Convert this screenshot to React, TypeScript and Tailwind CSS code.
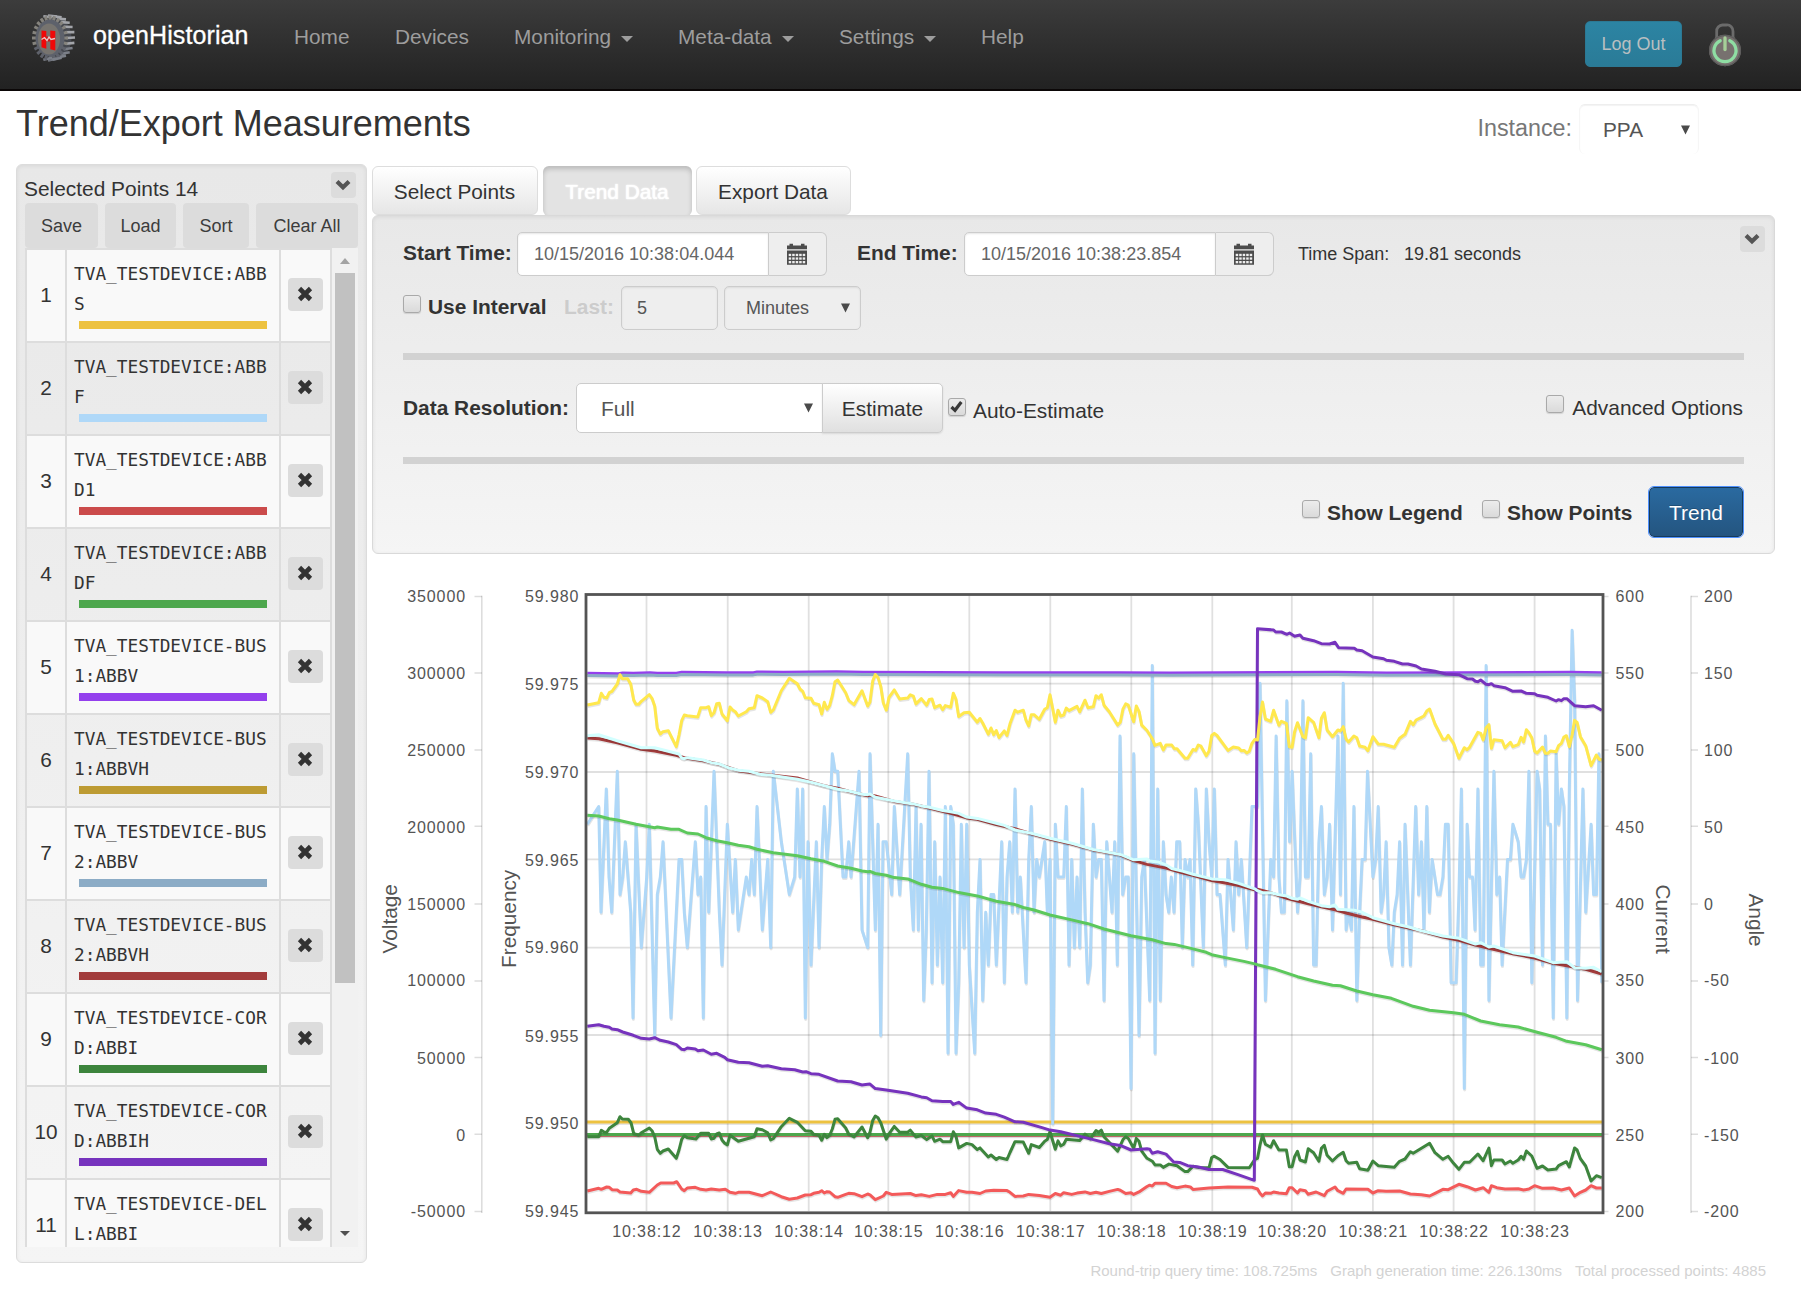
import React from "react";

type Pt = [number, number];

/* ---------- chart data ---------- */

/** Parses "x,y x,y ..." samples and maps them to chart pixels. */
const section = (src: string, ox: number, oy: number, sx: number, sy: number): Pt[] =>
  src
    .trim()
    .split(/\s+/)
    .map((p) => {
      const [x, y] = p.split(",").map(Number);
      return [ox + x / sx, oy + y / sy] as Pt;
    });

const upA = (s: string) => section(s, 370, 570, 3, 3);
const loA = (s: string) => section(s, 370, 900, 3, 3);
const mid = (s: string) => section(s, 850, 580, 3, 2.4123);
const upC = (s: string) => section(s, 1240, 580, 2.8, 3);
const loC = (s: string) => section(s, 1240, 900, 2.8, 3);

/** Frequency samples hold the level in mHz above 59.945 Hz. */
const freq = (s: string, ox: number, sx: number): Pt[] =>
  section(s, ox, 0, sx, 1).map(([x, v]) => [x, 771.3 + (25 - v) * 17.62] as Pt);

const toPath = (pts: Pt[]) => "M" + pts.map(([x, y]) => `${x.toFixed(1)} ${y.toFixed(1)}`).join("L");

const frequency: Pt[] = [
  ...freq(
    "652,22 686,23 693,17 709,24 717,19 725,17 742,25 750,18 758,19 766,21 782,17 789,11 798,22 814,15 830,19 838,22 854,10 862,18 871,19 879,21 903,11 927,20 935,20 943,17 952,15 976,21 984,18 992,19 1000,11 1008,23 1016,17 1032,25 1048,17 1056,14 1072,22 1088,17 1096,20 1105,16 1129,19 1137,18 1145,20 1153,18 1161,23 1177,16 1193,20 1202,15 1210,25 1234,21 1258,18 1274,19 1282,24 1290,19 1298,24 1306,11 1314,21 1323,14 1339,21 1347,15 1355,20 1363,23 1371,20 1379,22 1387,26 1395,25 1403,25 1419,19 1427,19 1436,21 1443,19 1467,25",
    370,
    3
  ),
  ...freq(
    "36,16 53,15 60,26 76,16 84,22 92,10 99,21 109,21 125,18 133,23 149,18 173,26 181,19 190,16 198,23 205,16 213,22 221,12 229,16 237,25 246,13 254,21 262,14 270,19 278,13 286,23 294,9 302,23 310,22 318,9 326,13 334,22 342,15 350,22 358,14 374,9 382,17 390,20 398,12 407,17 415,14 423,18 431,18 439,14 455,21 463,13 471,19 479,21 487,17 495,24 503,17 511,19 528,13 536,20 544,23 552,17 560,20 568,19 584,21 592,17 600,20 608,5 616,22 624,19 641,19 649,23 657,14 665,20 673,15 681,19 689,15 697,24 705,17 713,13 721,14 730,22 738,19 746,20 754,20 762,12 770,21 786,17 794,21 802,14 810,27 818,18 827,19 835,19 843,7 851,26 867,10 875,19 883,20 899,12 907,31 915,9 923,24 931,12 940,21 948,18 956,17 964,19 972,17 980,21 989,21 997,15 1005,20 1013,19 1020,20 1028,14 1037,24 1045,22 1060,15 1069,24 1077,21 1085,19 1093,24 1101,18 1110,18 1126,14 1134,20 1150,16 1158,21 1166,18 1174,20 1190,15 1206,23",
    850,
    3
  ),
  ...freq(
    "49,23 56,30 71,12 86,20 94,19 101,27 109,19 116,17 124,17 131,29 139,21 146,25 161,17 168,19 176,29 183,19 191,19 198,26 206,14 213,14 221,21 228,23 236,18 244,19 251,22 259,16 274,27 281,18 289,30 297,16 304,17 312,16 319,23 327,12 335,17 342,20 350,20 357,25 372,19 380,20 387,23 395,17 402,18 409,21 417,15 425,14 432,17 440,18 447,21 455,14 462,22 477,14 492,23 500,18 508,21 515,16 523,23 530,17 538,20 553,18 560,18 568,19 575,22 583,22 591,13 605,13 613,18 620,24 628,7 636,22 643,19 651,19 658,16 666,24 674,14 681,14 689,31 697,12 711,25 719,18 727,19 734,14 749,20 757,20 764,22 779,21 787,19 794,19 802,20 809,25 817,13 832,25 839,24 847,14 855,27 862,22 869,22 877,11 885,26 892,22 900,24 907,23 915,11 922,24 930,33 937,29 945,12 960,24 968,17 983,22 990,18 998,18 1005,26 1013,13",
    1240,
    2.8
  ),
];

const yellow: Pt[] = [
  ...upA(
    "652,405 686,398 694,370 702,382 710,384 718,368 726,364 742,342 750,314 757,326 773,326 782,342 791,390 798,403 806,403 814,394 838,374 846,385 854,408 862,475 871,492 879,485 895,482 919,530 927,495 935,452 943,435 952,437 983,441 992,413 1008,413 1016,410 1024,437 1032,428 1040,401 1048,400 1056,432 1072,452 1080,411 1088,420 1096,425 1105,438 1129,425 1137,416 1153,413 1161,377 1177,384 1193,395 1202,427 1210,420 1234,362 1258,325 1282,341 1290,357 1298,364 1306,383 1323,385 1331,400 1347,404 1355,432 1363,397 1371,418 1379,406 1387,377 1395,335 1403,330 1427,368 1436,391 1452,404 1476,362 1493,408"
  ),
  ...mid(
    "60,294 68,244 76,228 84,235 92,256 100,296 109,314 117,283 133,265 149,287 173,285 181,277 190,280 198,299 214,286 230,302 238,288 246,287 254,308 270,302 278,313 286,303 302,307 310,273 318,288 326,329 342,320 358,319 382,343 390,334 398,345 415,372 423,357 431,373 439,363 447,380 463,364 471,375 480,347 495,314 503,319 520,314 528,338 536,352 544,325 552,325 568,336 584,312 592,308 600,277 616,343 624,314 632,328 641,326 649,309 657,315 681,305 689,318 705,290 714,308 730,306 738,279 746,285 754,277 762,302 778,318 803,350 811,343 819,311 827,299 835,302 851,342 859,304 867,317 875,350 891,363 907,383 915,399 931,394 940,410 948,398 965,398 973,407 981,407 1005,430 1013,430 1029,409 1037,411 1045,398 1053,401 1069,424 1077,413 1085,375 1093,370 1101,375 1134,411 1150,403 1166,405 1174,412 1182,411 1190,417 1198,413 1206,394 1214,385"
  ),
  ...upC(
    "49,480 56,410 63,366 71,417 86,424 94,391 109,436 116,424 130,430 138,500 146,502 153,455 161,428 176,470 183,474 191,413 206,427 221,473 228,415 236,398 244,450 259,470 274,450 281,453 289,440 297,477 304,486 319,468 327,473 335,498 350,502 358,512 372,470 387,492 402,493 432,502 447,475 462,463 477,424 485,434 493,420 508,412 515,408 523,393 531,387 546,432 568,478 576,478 583,466 598,490 613,535 628,503 636,509 643,502 666,457 674,460 681,480 689,443 697,434 704,505 711,479 734,482 742,503 757,487 764,500 779,494 787,472 794,486 802,449 809,458 817,473 825,513 832,519 847,501 855,520 862,520 869,513 885,515 892,497 900,490 907,471 914,467 922,500 930,465 937,421 944,427 953,470 968,497 983,557 998,525 1006,538 1013,540"
  ),
];

const darkGreen: Pt[] = [
  ...loA(
    "652,710 686,710 694,691 702,696 710,697 718,685 742,668 750,650 757,657 775,658 783,668 791,700 806,706 814,698 838,684 846,692 854,710 862,748 871,760 879,753 895,747 919,775 927,750 935,718 943,707 952,713 978,717 992,700 1016,700 1024,717 1032,715 1040,702 1048,699 1056,720 1064,730 1072,735 1080,706 1105,724 1153,710 1161,686 1177,689 1193,698 1202,720 1210,716 1234,680 1258,655 1282,667 1306,692 1323,694 1331,703 1347,706 1355,721 1363,703 1371,713 1379,706 1387,687 1395,658 1403,656 1427,684 1436,702 1452,711 1476,681 1493,713"
  ),
  ...mid(
    "60,1332 68,1304 76,1293 84,1297 92,1309 109,1349 117,1336 133,1318 149,1332 173,1332 181,1327 198,1344 214,1340 230,1350 246,1341 254,1354 270,1349 278,1355 302,1355 310,1331 318,1342 326,1370 350,1359 366,1362 382,1374 390,1370 415,1392 423,1387 439,1398 447,1393 471,1398 480,1381 495,1355 520,1356 536,1383 544,1362 568,1369 584,1354 592,1350 600,1331 616,1373 624,1353 632,1365 641,1361 649,1349 689,1352 705,1337 721,1348 738,1328 746,1332 754,1327 762,1343 803,1378 819,1350 827,1343 835,1347 851,1371 859,1347 867,1354 875,1378 891,1395 907,1402 915,1411 931,1411 940,1417 957,1409 981,1413 1005,1427 1013,1427 1029,1414 1045,1417 1077,1418 1085,1393 1093,1390 1110,1398 1134,1417 1198,1418 1214,1398"
  ),
  ...loC(
    "49,775 56,735 63,705 71,733 86,742 94,722 109,750 130,750 138,800 146,800 153,770 161,754 168,780 183,786 191,746 206,758 221,784 228,745 236,736 244,766 259,783 274,767 289,757 297,782 304,790 327,787 335,806 358,811 372,783 387,797 432,802 447,784 462,777 477,755 485,760 531,730 546,758 568,778 583,769 598,790 613,808 628,787 643,787 666,762 681,782 697,744 704,797 711,780 734,780 742,792 757,783 764,790 779,780 787,769 794,778 802,753 817,768 832,805 847,798 862,810 885,807 892,797 914,785 922,801 937,744 944,750 953,776 968,798 983,843 998,827 1013,833"
  ),
];

const red: Pt[] = [
  ...loA(
    "652,873 686,865 694,868 710,861 718,862 726,869 742,870 750,876 782,879 790,870 800,868 814,874 838,877 862,855 872,849 911,849 920,845 935,867 943,872 952,864 976,862 992,868 1008,870 1024,867 1048,870 1066,868 1080,877 1096,880 1105,877 1137,877 1177,887 1202,876 1234,890 1258,898 1282,894 1306,885 1323,884 1331,880 1347,877 1355,872 1363,879 1371,875 1379,876 1395,890 1403,892 1427,883 1436,880 1452,881 1476,890 1493,882"
  ),
  ...mid(
    "60,1483 76,1495 100,1486 109,1477 125,1482 181,1480 198,1485 214,1483 238,1487 262,1482 286,1482 302,1478 310,1487 326,1473 350,1477 366,1477 390,1480 407,1474 431,1472 471,1473 480,1477 495,1487 520,1486 536,1482 568,1485 600,1489 616,1480 632,1484 641,1478 665,1482 681,1479 705,1476 721,1480 738,1477 754,1480 778,1475 803,1470 811,1472 827,1480 843,1478 851,1482 867,1476 891,1463 899,1460 907,1462 915,1455 948,1455 965,1463 981,1466 1005,1462 1021,1464 1029,1470 1077,1467 1134,1464 1206,1465"
  ),
  ...loC(
    "49,867 56,880 63,888 71,879 86,880 94,876 109,879 130,881 138,863 146,863 161,879 168,869 183,872 191,883 213,876 236,887 244,874 266,861 274,872 289,880 297,867 358,868 372,879 387,872 409,874 447,873 477,882 508,884 531,888 546,880 568,868 583,869 613,853 636,860 659,870 681,863 697,877 704,857 719,863 742,867 779,866 794,870 809,867 825,857 847,865 877,864 900,870 922,864 937,888 953,877 968,870 983,857 998,864 1013,864"
  ),
];

const purple: Pt[] = [
  ...loA(
    "652,379 686,374 702,379 718,382 726,387 742,389 758,396 790,406 814,415 838,417 854,413 871,421 895,426 919,434 935,448 943,449 952,444 976,447 984,452 1000,450 1024,463 1040,460 1064,472 1072,479 1105,487 1137,488 1177,499 1193,497 1234,506 1274,509 1298,516 1308,515 1323,521 1347,523 1403,543 1443,545 1476,555 1493,553"
  ),
  ...mid(
    "60,1216 76,1227 109,1230 173,1238 214,1247 230,1249 246,1256 278,1258 302,1258 310,1265 326,1260 350,1274 382,1278 407,1286 439,1289 463,1296 495,1307 520,1308 576,1321 600,1327 632,1331 730,1350 778,1360 811,1364 843,1375 891,1372 899,1373 907,1383 923,1379 948,1385 971,1404 989,1405 1013,1413 1045,1416 1077,1422 1118,1422 1166,1435 1213,1448"
  ),
  ...upC(
    "49,146 94,150 100,156 116,156 131,163 139,159 153,169 168,165 176,175 206,182 228,191 251,192 266,187 276,203 320,205 327,210 342,212 372,231 402,236 410,241 432,244 455,252 470,252 493,258 508,267 546,274 576,282 613,284 636,296 651,297 659,304 666,305 674,300 689,313 697,314 704,311 711,317 742,323 764,334 787,333 802,340 825,341 832,346 862,352 885,363 892,359 900,362 907,356 915,356 937,377 968,380 990,377 1013,391"
  ),
];

const cyan: Pt[] = [
  ...upA(
    "652,497 686,494 742,512 814,533 854,533 927,552 935,564 943,566 952,563 1000,570 1024,578 1048,582 1080,595 1105,601 1137,604 1169,613 1202,616 1282,628 1323,637 1363,647 1403,658 1436,663 1476,673 1493,674"
  ),
  ...mid(
    "60,516 76,524 133,533 190,540 214,545 238,548 278,556 302,559 326,563 350,572 382,575 439,587 463,592 495,603 544,611 600,623 665,635 730,650 811,662 851,675 891,673 899,678 923,680 948,687 965,696 1000,703 1029,710 1085,721 1126,723 1166,732 1214,745"
  ),
  ...upC(
    "49,932 63,938 86,938 109,944 131,948 146,955 161,958 168,954 191,964 228,977 251,980 266,975 274,988 320,991 342,997 372,1013 402,1022 432,1031 470,1040 508,1052"
  ),
  ...loC("531,98 568,108 613,115 659,132 674,128 697,141 711,138 764,158 825,168 877,188 915,185 937,203 968,205 990,202 1013,215"),
];

const maroon: Pt[] = [
  ...upA(
    "652,504 686,506 742,518 814,538 854,543 919,556 943,563 1000,572 1048,583 1105,602 1169,611 1202,615 1282,624 1323,636 1363,647 1403,655 1436,664 1493,677"
  ),
  ...mid(
    "60,519 76,521 133,534 190,541 238,550 302,563 326,568 350,574 382,577 439,590 495,600 544,612 600,625 665,637 730,651 811,663 851,677 891,686 948,695 1000,707 1029,712 1085,725 1126,731 1166,737 1214,747"
  ),
  ...upC("49,928 86,938 131,955 161,963 191,971 228,980 266,989 300,1000 342,1011 372,1018 432,1034 508,1052"),
  ...loC("531,100 568,111 613,121 659,135 697,145 764,161 825,174 877,190 915,197 968,208 1013,222"),
];

const lightGreen: Pt[] = [
  ...upA(
    "652,736 686,738 718,746 742,750 798,763 854,773 862,771 903,778 927,778 952,789 984,792 1008,803 1040,812 1072,818 1105,826 1137,830 1161,838 1210,848 1282,857 1323,866 1363,874 1403,888 1443,895 1476,903 1493,905"
  ),
  ...mid(
    "60,703 76,708 109,712 133,718 173,721 214,734 246,741 278,744 326,754 382,762 439,775 495,783 520,790 552,796 600,808 665,820 714,829 762,842 843,858 907,868 948,877 973,879 1029,890 1069,898 1085,904 1126,911 1182,920 1214,926"
  ),
  ...loC(
    "49,194 100,208 161,230 206,243 259,256 281,257 327,273 372,284 424,295 485,319 531,331 598,338 628,343 674,363 727,374 779,381 832,397 885,412 915,424 968,434 1013,449"
  ),
];

const violet: Pt[] = upA(
  "652,310 745,311 758,309 790,310 840,308 862,310 919,310 935,307 1070,308 1150,308 1161,306 1240,307 1400,305 1480,307 1900,308 2250,308 2400,309 2900,307 3050,309 3600,307 3695,308"
);
const steel: Pt[] = violet.map(([x, y]) => [x, y + 2.2]);

const series: { color: string; pts: Pt[] }[] = [
  { color: "#edc240", pts: [[587, 1122], [1602, 1122]] },
  { color: "#afd8f8", pts: frequency },
  { color: "#cb4b4b", pts: [[587, 1135.3], [1602, 1135.3]] },
  { color: "#4da74d", pts: [[587, 1134.6], [1602, 1134.6]] },
  { color: "#9440ed", pts: violet },
  { color: "#8cacc6", pts: steel },
  { color: "#a23c3c", pts: maroon },
  { color: "#3d853d", pts: darkGreen },
  { color: "#7633bd", pts: purple },
  { color: "#ffe84d", pts: yellow },
  { color: "#d2ffff", pts: cyan },
  { color: "#f35a5a", pts: red },
  { color: "#5cc85c", pts: lightGreen },
];

const axisY = [596.5, 673, 750, 826.3, 904, 981, 1057.5, 1134.3, 1211.5];
const voltage = ["350000", "300000", "250000", "200000", "150000", "100000", "50000", "0", "-50000"];
const current = ["600", "550", "500", "450", "400", "350", "300", "250", "200"];
const angle = ["200", "150", "100", "50", "0", "-50", "-100", "-150", "-200"];
const labelY = [601.7, 678.5, 756, 832.5, 910, 986.3, 1063.7, 1141, 1217];
const hertz = ["59.980", "59.975", "59.970", "59.965", "59.960", "59.955", "59.950", "59.945"];
const hertzY = [601.5, 690, 777.5, 865.5, 953, 1042, 1129.3, 1217];
const gridY = [683.7, 772, 859.3, 947.7, 1035];
const gridX = [646.5, 727.7, 808.7, 888.3, 969.3, 1050.3, 1131.3, 1212.3, 1291.8, 1372.9, 1453.6, 1534.6];

function Chart() {
  return (
    <svg
      className="block h-[690px] w-[1403px] shrink-0"
      viewBox="372 565 1403 690"
      fontFamily="'Liberation Sans', Arial, sans-serif"
      fill="none"
    >
      <rect x="586" y="594.5" width="1017" height="618.3" fill="#fff" />
      <g stroke="#545454" strokeOpacity="0.18" strokeWidth="1.8">
        {gridY.map((y) => (
          <path key={y} d={`M587 ${y}H1602`} />
        ))}
        {gridX.map((x) => (
          <path key={x} d={`M${x} 596V1211`} />
        ))}
      </g>
      <g stroke="#545454" strokeOpacity="0.2" strokeWidth="1.6">
        <path d="M481.8 595.7V1213M1691 595.7V1213" />
        {axisY.map((y) => (
          <path key={y} d={`M474.5 ${y}H482M1604 ${y}H1608.5M1691 ${y}H1698`} />
        ))}
      </g>
      <g strokeLinejoin="round" strokeWidth="3">
        {series.map((s) => (
          <g key={s.color}>
            <path d={toPath(s.pts.map(([x, y]) => [x + 0.4, y + 1.5] as Pt))} stroke="#000" strokeOpacity="0.1" />
            <path d={toPath(s.pts)} stroke={s.color} />
          </g>
        ))}
      </g>
      <rect x="586" y="594.5" width="1017" height="618.3" stroke="#545454" strokeWidth="2.8" />
      <g fill="#545454" fontSize="16" letterSpacing="0.9">
        {voltage.map((t, i) => (
          <text key={t} x="466" y={labelY[i]} textAnchor="end">
            {t}
          </text>
        ))}
        {hertz.map((t, i) => (
          <text key={t} x="579.3" y={hertzY[i]} textAnchor="end">
            {t}
          </text>
        ))}
        {current.map((t, i) => (
          <text key={t} x="1615.5" y={labelY[i]}>
            {t}
          </text>
        ))}
        {angle.map((t, i) => (
          <text key={t} x="1704" y={labelY[i]}>
            {t}
          </text>
        ))}
        {gridX.map((x, i) => (
          <text key={x} x={x + 0.4} y="1236.8" textAnchor="middle">
            {`10:38:${12 + i}`}
          </text>
        ))}
      </g>
      <g fill="#545454" fontSize="20.8">
        <text transform="translate(397 953.5) rotate(-90)">Voltage</text>
        <text transform="translate(515.5 968) rotate(-90)">Frequency</text>
        <text transform="translate(1655.5 884.5) rotate(90)">Current</text>
        <text transform="translate(1749 893.5) rotate(90)">Angle</text>
      </g>
    </svg>
  );
}

/* ---------- icons ---------- */

function GearLogo() {
  const teeth = Array.from({ length: 24 }, (_, i) => {
    const a = (i / 24) * Math.PI * 2;
    const c = Math.cos(a);
    const s = Math.sin(a);
    return { x1: 19 + 13 * c, y1: 24 + 18 * s, x2: 19 + 18 * c, y2: 24 + 22.5 * s, right: c > -0.3, light: s < 0.3 };
  });
  return (
    <svg className="h-[48px] w-[46px]" viewBox="0 0 46 48">
      <ellipse cx="25.5" cy="24" rx="15" ry="20.5" fill="#45484f" />
      {teeth.map((t, i) => (
        <g key={i}>
          {t.right && (
            <path
              d={`M${t.x2 - 2} ${t.y2}L${t.x2 + 7} ${24 + (t.y2 - 24) * 0.93 - 0.5}`}
              stroke={t.light ? "#a3a5aa" : "#7b7f88"}
              strokeWidth="2.6"
            />
          )}
          <path d={`M${t.x1} ${t.y1}L${t.x2} ${t.y2}`} stroke={t.light ? "#85837d" : "#5f626b"} strokeWidth="3" />
        </g>
      ))}
      <ellipse cx="19" cy="24" rx="14.5" ry="18.5" fill="#5d616b" />
      <ellipse cx="18" cy="25" rx="11" ry="15.5" fill="#77746f" />
      <path d="M10.500 16.500l4.800.6v17.600l-4.800-1.400zM19.300 16.500l5 .4v19.500l-5-1.200z" fill="#f00808" />
      <path d="M15 22.500h4.500v5H15z" fill="#c81a1a" />
      <path d="M10.500 25.500l3-2 2.500 3 2-3.500 2 2.500 4-1" stroke="#e9c8c8" strokeWidth="1.3" fill="none" />
    </svg>
  );
}

function LockPower() {
  return (
    <svg className="h-[44px] w-[34px]" viewBox="0 0 34 44" fill="none">
      <path d="M8.700 15V8.500A6 6 0 0 1 14.500 2h4A6 6 0 0 1 25 8.500V15" stroke="#6b6b6b" strokeWidth="2.8" />
      <ellipse cx="17" cy="27.500" rx="16" ry="15.700" fill="#77716f" />
      <ellipse cx="17" cy="27.500" rx="15.300" ry="15" stroke="#5c5c5c" strokeWidth="1.300" />
      <path d="M12.200 17.700A11 11 0 1 0 21.800 17.700" stroke="#8fdda3" strokeWidth="3.300" strokeLinecap="round" />
      <path d="M17 15v11.500" stroke="#a5cf98" strokeWidth="3.300" strokeLinecap="round" />
    </svg>
  );
}

const ChevronBox = ({ className }: { className: string }) => (
  <div className={`flex h-[26px] w-[25px] items-center justify-center rounded-[4px] bg-[#dcdcdc] pr-px ${className}`}>
    <svg className="h-[12px] w-[16px]" viewBox="0 0 16 12">
      <path d="M2 2.500L8 8.300L14 2.500" fill="none" stroke="#555" strokeWidth="4.200" />
    </svg>
  </div>
);

const RemoveIcon = () => (
  <svg className="h-[16px] w-[16px]" viewBox="0 0 16 16">
    <path d="M2.500 2.500L13.500 13.500M13.500 2.500L2.500 13.500" stroke="#333" strokeWidth="4.600" />
  </svg>
);

const CalendarIcon = () => (
  <svg className="h-[22px] w-[20px]" viewBox="0 0 20 22">
    <path d="M0 2.500h2.500V0.700h3.500v1.800h8V0.700h3.500v1.800H20V6.300H0zM0 7.500h20v14.200H0z" fill="#4c4c4c" />
    {[10.8, 14.4, 18].map((y) =>
      [1.5, 5, 8.5, 12, 15.5].map((x) => <rect key={`${x}-${y}`} x={x + 0.2} y={y} width="2.500" height="2.300" fill="#eee" />)
    )}
  </svg>
);

const DownTriangle = () => (
  <svg className="h-[10px] w-[9px] shrink-0" viewBox="0 0 9 10">
    <path d="M0 0.500H9L4.500 9.500z" fill="#4a4a4a" />
  </svg>
);

const Check = ({ on, className = "" }: { on?: boolean; className?: string }) => (
  <div
    className={`h-[18px] w-[18px] shrink-0 rounded-[3px] border-[1.5px] border-[#a9a9a9] bg-linear-to-b from-[#ececec] to-[#dadada] shadow-[0_1px_1px_rgba(0,0,0,0.12)] ${className}`}
  >
    {on && (
      <svg className="block h-[15px] w-[15px]" viewBox="0 0 15 15">
        <path d="M2.500 8L6 11.300L12.300 3" fill="none" stroke="#383838" strokeWidth="3.200" />
      </svg>
    )}
  </div>
);

/* ---------- page pieces ---------- */

const nav = [
  { label: "Home", w: "w-[101px]" },
  { label: "Devices", w: "w-[119px]" },
  { label: "Monitoring", w: "w-[164px]", menu: true },
  { label: "Meta-data", w: "w-[161px]", menu: true },
  { label: "Settings", w: "w-[142px]", menu: true },
  { label: "Help", w: "w-[60px]" },
];

function Navbar() {
  return (
    <header className="flex h-[91px] shrink-0 items-start border-b-2 border-[#0b0707] bg-linear-to-b from-[#3c3c3c] to-[#222]">
      <div className="ml-[31px] mt-[14px]">
        <GearLogo />
      </div>
      <div className="ml-[16px] mt-[20px] w-[201px] text-[25px] leading-[31px] tracking-[0.1px] text-white [-webkit-text-stroke:0.3px_#fff]">
        openHistorian
      </div>
      <nav className="mt-[22px] flex text-[20.8px] leading-[30px] text-[#9d9d9d]">
        {nav.map((n) => (
          <div key={n.label} className={`flex items-center whitespace-nowrap ${n.w}`}>
            {n.label}
            {n.menu && (
              <span className="ml-[10px] mt-[3px] border-x-[6px] border-t-[6px] border-x-transparent border-t-[#9d9d9d]" />
            )}
          </div>
        ))}
      </nav>
      <button className="ml-auto mt-[21px] flex h-[46px] w-[97px] items-center justify-center rounded-[5px] border border-[#2c7994] bg-linear-to-b from-[#2c84a3] to-[#2a7b97] text-[18px] text-[#b9bfc1]">
        Log Out
      </button>
      <div className="ml-[26px] mr-[59px] mt-[23px]">
        <LockPower />
      </div>
    </header>
  );
}

const points = [
  ["TVA_TESTDEVICE:ABB", "S", "bg-[#edc240]"],
  ["TVA_TESTDEVICE:ABB", "F", "bg-[#afd8f8]"],
  ["TVA_TESTDEVICE:ABB", "D1", "bg-[#cb4b4b]"],
  ["TVA_TESTDEVICE:ABB", "DF", "bg-[#4da74d]"],
  ["TVA_TESTDEVICE-BUS", "1:ABBV", "bg-[#9440ed]"],
  ["TVA_TESTDEVICE-BUS", "1:ABBVH", "bg-[#bd9b33]"],
  ["TVA_TESTDEVICE-BUS", "2:ABBV", "bg-[#8cacc6]"],
  ["TVA_TESTDEVICE-BUS", "2:ABBVH", "bg-[#a23c3c]"],
  ["TVA_TESTDEVICE-COR", "D:ABBI", "bg-[#3d853d]"],
  ["TVA_TESTDEVICE-COR", "D:ABBIH", "bg-[#7633bd]"],
  ["TVA_TESTDEVICE-DEL", "L:ABBI", "bg-[#ffe84d]"],
];

function SelectedPoints() {
  return (
    <aside className="ml-[16px] mt-[-1px] flex h-[1099px] w-[351px] shrink-0 flex-col rounded-[6px] border border-[#dcdcdc] bg-linear-to-b from-[#e8e8e8] to-[#f5f5f5] pl-[8px] shadow-[inset_0_1px_4px_rgba(0,0,0,0.07)]">
      <div className="flex h-[38px] justify-between">
        <div className="ml-[-1px] mt-[8px] text-[20.9px] leading-[31px] text-[#333]">Selected Points 14</div>
        <ChevronBox className="mr-[10px] mt-[7px]" />
      </div>
      <div className="flex text-[18px] text-[#3c3c3c]">
        <button className="h-[45px] w-[73px] rounded-[4px] bg-[#dcdcdc] pt-px">Save</button>
        <button className="ml-[7px] h-[45px] w-[71px] rounded-[4px] bg-[#dcdcdc] pt-px">Load</button>
        <button className="ml-[7px] h-[45px] w-[66px] rounded-[4px] bg-[#dcdcdc] pt-px">Sort</button>
        <button className="ml-[7px] h-[45px] w-[102px] rounded-[4px] bg-[#dcdcdc] pt-px">Clear All</button>
      </div>
      <div className="flex h-[999px]">
        <div className="w-[307px] overflow-hidden border-l-2 border-[#ddd]">
          {points.map(([a, b, color], i) => (
            <div key={i} className={`flex h-[93px] border-t-2 border-[#ddd] ${i % 2 === 0 ? "bg-[#f9f9f9]" : ""}`}>
              <div className="flex w-[38px] items-center justify-center pb-[1px] text-[20.8px] text-[#333]">{i + 1}</div>
              <div className="w-[214px] border-l-2 border-[#ddd] pl-[7px] pt-[9px]">
                <div className="font-['DejaVu_Sans_Mono','Liberation_Mono',monospace] text-[17.8px] leading-[30px] text-[#333]">
                  <div className="whitespace-nowrap">{a}</div>
                  <div>{b}</div>
                </div>
                <div className={`ml-[5px] mt-[2px] h-[8px] w-[188px] ${color}`} />
              </div>
              <div className="w-[53px] border-x-2 border-[#ddd] pl-[7px] pt-[28px]">
                <div className="flex h-[33px] w-[35px] items-center justify-center rounded-[4px] bg-[#dcdcdc] pb-px pr-[2px]">
                  <RemoveIcon />
                </div>
              </div>
            </div>
          ))}
        </div>
        <div className="flex w-[26px] flex-col items-center bg-[#f1f1f1]">
          <div className="mt-[10px] border-x-[5.5px] border-b-[6px] border-x-transparent border-b-[#a3a3a3]" />
          <div className="mt-[9px] h-[710px] w-[20px] bg-[#c1c1c1]" />
          <div className="mt-[248px] border-x-[5px] border-t-[5.5px] border-x-transparent border-t-[#505050]" />
        </div>
      </div>
    </aside>
  );
}

const TimeInput = ({ value }: { value: string }) => (
  <div className="flex h-[44px]">
    <div className="flex w-[252px] items-center rounded-l-[5px] border-[1.5px] border-[#ccc] bg-white pl-[16px] pt-px text-[18px] text-[#666] shadow-[inset_0_1px_2px_rgba(0,0,0,0.1)]">
      {value}
    </div>
    <div className="flex w-[58px] items-center justify-center rounded-r-[6px] border border-l-0 border-[#ccc] bg-[#eee] pr-px">
      <CalendarIcon />
    </div>
  </div>
);

function TrendOptions() {
  return (
    <section className="h-[339px] w-[1403px] shrink-0 rounded-[6px] border border-[#d9d9d9] bg-linear-to-b from-[#e8e8e8] to-[#f5f5f5] pl-[30px] text-[20.9px] text-[#333] shadow-[inset_0_1px_4px_rgba(0,0,0,0.07)]">
      <div className="flex h-[60px]">
        <div className="mt-[21px] w-[114px] font-bold leading-[31px]">Start Time:</div>
        <div className="mt-[16px]">
          <TimeInput value="10/15/2016 10:38:04.044" />
        </div>
        <div className="ml-[30px] mt-[21px] w-[107px] font-bold leading-[31px]">End Time:</div>
        <div className="mt-[16px]">
          <TimeInput value="10/15/2016 10:38:23.854" />
        </div>
        <div className="ml-[24px] mt-[23px] w-[106px] text-[18px] leading-[31px]">Time Span:</div>
        <div className="mt-[23px] text-[18px] leading-[31px]">19.81 seconds</div>
        <ChevronBox className="ml-auto mr-[9px] mt-[10px]" />
      </div>
      <div className="mt-[10px] flex h-[44px]">
        <Check className="mt-[9px]" />
        <div className="ml-[7px] mt-[5px] w-[136px] font-bold leading-[31px]">Use Interval</div>
        <div className="mt-[5px] w-[57px] font-bold leading-[31px] text-[#ccc]">Last:</div>
        <div className="flex w-[97px] items-center rounded-[5px] border-[1.5px] border-[#ccc] bg-[#eee] pl-[15px] text-[18px] text-[#555] shadow-[inset_0_1px_2px_rgba(0,0,0,0.08)]">
          5
        </div>
        <div className="ml-[6px] flex w-[137px] items-center justify-between rounded-[5px] border-[1.5px] border-[#ccc] bg-[#eee] pl-[21px] pr-[10px] text-[18px] text-[#555] shadow-[inset_0_1px_2px_rgba(0,0,0,0.08)]">
          Minutes
          <DownTriangle />
        </div>
      </div>
      <div className="mt-[23px] h-[7px] w-[1341px] bg-[#d2d2d2]" />
      <div className="mt-[23px] flex h-[50px]">
        <div className="mt-[9px] w-[173px] whitespace-nowrap font-bold leading-[31px]">Data Resolution:</div>
        <div className="flex w-[247px] items-center justify-between rounded-l-[5px] border-[1.5px] border-[#ccc] bg-white pl-[24px] pr-[9px] text-[#555]">
          <span className="pt-[2px]">Full</span>
          <DownTriangle />
        </div>
        <div className="ml-[-1px] flex w-[121px] items-center justify-center rounded-r-[5px] border-[1.5px] border-[#ccc] bg-linear-to-b from-white to-[#e0e0e0] pt-[2px] shadow-[0_1px_2px_rgba(0,0,0,0.1)]">
          Estimate
        </div>
        <Check on className="ml-[5px] mt-[15px]" />
        <div className="ml-[7px] mt-[12px] leading-[31px]">Auto-Estimate</div>
        <Check className="ml-auto mt-[12px]" />
        <div className="ml-[8px] mr-[31px] mt-[9px] leading-[31px]">Advanced Options</div>
      </div>
      <div className="mt-[24px] h-[7px] w-[1341px] bg-[#d2d2d2]" />
      <div className="mt-[23px] flex h-[50px] justify-end pr-[31px] font-bold">
        <Check className="mt-[13px]" />
        <div className="ml-[7px] mt-[10px] w-[155px] leading-[31px]">Show Legend</div>
        <Check className="mt-[13px]" />
        <div className="ml-[7px] mt-[10px] w-[142px] leading-[31px]">Show Points</div>
        <button className="w-[94px] rounded-[5px] border border-[#163a5a] bg-linear-to-b from-[#2a6aa0] to-[#245580] pt-[2px] font-normal text-white outline-1 outline-[#4d90fe] [text-shadow:0_-1px_0_rgba(0,0,0,0.2)]">
          Trend
        </button>
      </div>
    </section>
  );
}

export default function App() {
  return (
    <div className="flex h-[1307px] w-[1801px] flex-col overflow-hidden bg-white font-['Liberation_Sans',Arial,sans-serif]">
      <Navbar />
      <div className="flex h-[74px] shrink-0">
        <h1 className="ml-[16px] mt-[13px] text-[36px] leading-[40px] text-[#333]">Trend/Export Measurements</h1>
        <div className="ml-auto mt-[21px] text-[23.3px] leading-[32px] text-[#777]">Instance:</div>
        <div className="ml-[7px] mr-[102px] mt-[13px] flex h-[50px] w-[120px] items-center justify-between rounded-[6px] border-x border-t border-x-[#f6f6f6] border-t-[#eee] pl-[23px] pr-[8px] text-[20.8px] text-[#555] shadow-[inset_0_1px_1px_rgba(0,0,0,0.05)]">
          PPA
          <DownTriangle />
        </div>
      </div>
      <div className="flex">
        <SelectedPoints />
        <main className="ml-[5px] mt-px flex w-[1403px] flex-col">
          <div className="flex h-[49px] text-[20.8px] text-[#333]">
            <button className="w-[166px] rounded-[6px] border-[1.5px] border-[#ddd] bg-linear-to-b from-white to-[#e6e6e6] pr-px pt-[2px]">
              Select Points
            </button>
            <button className="ml-[5px] h-[50px] w-[149px] rounded-[6px] bg-[#e3e3e3] pr-px pt-px text-white shadow-[inset_0_3px_5px_rgba(0,0,0,0.18)] [text-shadow:0_0_2px_#fff,0_0_1px_#fff]">
              Trend Data
            </button>
            <button className="ml-[4px] w-[155px] rounded-[6px] border-[1.5px] border-[#ddd] bg-linear-to-b from-white to-[#e6e6e6] pr-px pt-[2px]">
              Export Data
            </button>
          </div>
          <TrendOptions />
          <div className="mt-[11px]">
            <Chart />
          </div>
          <div className="mr-[9px] mt-[6px] flex justify-end gap-[13px] whitespace-nowrap text-[15px] leading-[20px] text-[#d3d3d3]">
            <span>Round-trip query time: 108.725ms</span>
            <span>Graph generation time: 226.130ms</span>
            <span>Total processed points: 4885</span>
          </div>
        </main>
      </div>
    </div>
  );
}
